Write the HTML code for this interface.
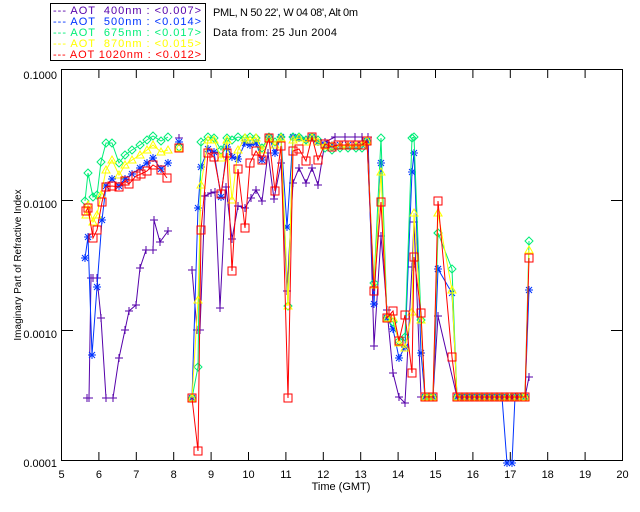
<!DOCTYPE html>
<html><head><meta charset="utf-8"><style>
body{margin:0;background:#fff;width:640px;height:512px;overflow:hidden}
svg{display:block;font-family:"Liberation Sans",sans-serif}
text{white-space:pre}
</style></head><body>
<svg id="s" width="640" height="512" xmlns="http://www.w3.org/2000/svg">
<rect x="50.5" y="3.5" width="155" height="57" fill="#fff" stroke="#000"/>
<g font-size="11">
<text x="53" y="14" fill="#5500aa" textLength="148" lengthAdjust="spacing">--- AOT  400nm : &lt;0.007&gt;</text>
<text x="53" y="25" fill="#0033ff" textLength="148" lengthAdjust="spacing">--- AOT  500nm : &lt;0.014&gt;</text>
<text x="53" y="36" fill="#00ee77" textLength="148" lengthAdjust="spacing">--- AOT  675nm : &lt;0.017&gt;</text>
<text x="53" y="47" fill="#ffff00" textLength="148" lengthAdjust="spacing">--- AOT  870nm : &lt;0.015&gt;</text>
<text x="53" y="58" fill="#ff0000" textLength="148" lengthAdjust="spacing">--- AOT 1020nm : &lt;0.012&gt;</text>
<text x="213" y="16" fill="#000" textLength="145" lengthAdjust="spacing">PML, N 50 22', W 04 08', Alt 0m</text>
<text x="213" y="36" fill="#000" textLength="124" lengthAdjust="spacing">Data from: 25 Jun 2004</text>
<text x="57" y="79" text-anchor="end">0.1000</text>
<text x="57" y="208" text-anchor="end">0.0100</text>
<text x="57" y="338" text-anchor="end">0.0010</text>
<text x="57" y="467" text-anchor="end">0.0001</text>
<text x="341" y="490" text-anchor="middle">Time (GMT)</text>
<text transform="translate(21,265) rotate(-90)" text-anchor="middle" font-size="10">Imaginary Part of Refractive Index</text>
</g>
<rect x="61.5" y="69.5" width="561" height="391" fill="none" stroke="#000"/>
<g id="ax" stroke="#000"></g>
<g id="xl" font-size="11" text-anchor="middle"></g>
<g id="d" fill="none" stroke-width="1"></g>
</svg>
<script>
var ax=document.getElementById('ax'),xl=document.getElementById('xl'),d=document.getElementById('d');
var NS='http://www.w3.org/2000/svg';
function el(p,t,a){var e=document.createElementNS(NS,t);for(var k in a)e.setAttribute(k,a[k]);p.appendChild(e);return e;}
for(var h=5;h<=20;h++){var x=61.5+37.4*(h-5);
 if(h>5&&h<20){el(ax,'line',{x1:x,y1:70,x2:x,y2:78});el(ax,'line',{x1:x,y1:460,x2:x,y2:452});}
 var t=el(xl,'text',{x:x,y:478});t.textContent=h;}
[200.5,330.5].forEach(function(y){el(ax,'line',{x1:62,y1:y,x2:73,y2:y});el(ax,'line',{x1:622,y1:y,x2:611,y2:y});});
function P(s){return s.trim().split(/\s+/).map(function(q){return q.split(',').map(Number)});}
var S=[
{c:'#5500aa',m:'+',p:P("87,398 89,398 91,278 93,278 97,278 101,318 106,398 113,398 119,358 125,330 129,311 136,305 140,268 146,250 153,250 154,220 160,242 168,231"),p2:P("179,138"),p3:P("192,270 197,330 200,330 205,196 211,193 215,192 220,308 226,187 232,239 238,206 245,208 251,198 256,190 262,201 268,153 274,199 281,163 287,291 293,183 299,168 306,183 312,168 318,185 325,142 335,137 345,137 355,137 362,137 368,137 374,346 381,236 387,310 393,373 399,397 405,403 412,267 414,222 421,397 425,397 429,397 433,397 438,316"),p4:P("457,397 462,397 467,397 472,397 477,397 482,397 487,397 492,397 497,397 502,397 507,397 512,397 517,397 522,397 525,397 529,377")},
{c:'#0033ff',m:'*',p:P("85,258 88,237 92,355 97,287 102,220 106,186 112,179 119,186 125,179 132,174 140,168 147,163 153,158 161,169 168,163"),p2:P("179,142"),p3:P("192,398 198,208 201,167 208,149 214,152 221,197 227,147 232,157 238,159 245,143 250,145 256,143 262,160 269,137 275,153 281,137 287,227 293,137 299,138 306,140 312,137 318,142 325,145 332,145 340,145 348,145 356,145 362,145 367,141 374,304 381,163 387,318 393,329 399,358 405,347 412,172 414,153 421,353 425,397 429,397 433,397 438,269"),p4:P("452,293 457,397 462,397 467,397 472,397 477,397 482,397 487,397 492,397 497,397 502,397 507,463 512,463 515,397 520,397 525,397 529,290")},
{c:'#00ee77',m:'d',p:P("85,201 88,173 93,197 97,195 101,162 106,143 112,143 119,163 125,155 132,150 140,145 147,140 153,136 161,141 168,137"),p2:P("179,147"),p3:P("192,398 198,367 201,142 208,137 214,138 221,150 227,138 232,140 238,137 245,138 250,137 256,138 262,148 269,137 275,142 281,137 288,306 293,137 299,137 306,140 312,137 318,140 325,148 332,150 340,148 348,148 356,148 362,148 367,141 374,283 381,138 387,318 393,322 399,341 405,337 412,138 414,137 421,320 425,397 429,397 433,397 438,233"),p4:P("452,269 457,397 462,397 467,397 472,397 477,397 482,397 487,397 492,397 497,397 502,397 507,397 512,397 517,397 522,397 525,397 529,241")},
{c:'#ffff00',m:'t',p:P("86,215 88,205 93,222 97,215 101,195 106,170 112,160 119,175 125,165 132,160 140,155 147,150 153,145 161,152 168,150"),p2:P("179,148"),p3:P("192,398 198,300 201,185 208,140 214,140 221,158 227,140 232,200 238,150 245,138 250,140 256,138 262,150 269,138 275,145 281,138 288,306 293,140 299,138 306,142 312,138 318,142 325,146 332,146 340,146 348,146 356,146 362,146 367,141 374,285 381,172 387,318 393,318 399,343 405,348 412,312 414,213 421,320 425,397 429,397 433,397 438,213"),p4:P("452,290 457,397 462,397 467,397 472,397 477,397 482,397 487,397 492,397 497,397 502,397 507,397 512,397 517,397 522,397 525,397 529,250")},
{c:'#ff0000',m:'s',p:P("86,211 88,208 93,238 97,230 102,202 106,187 112,186 119,187 125,181 129,184 136,176 141,174 147,171 153,165 161,170 167,178"),p2:P("179,148"),p3:P("192,398 198,451 201,230 208,153 214,157 221,194 227,153 232,271 238,169 245,228 250,163 256,151 262,160 269,138 275,191 281,146 288,398 293,151 299,149 306,161 312,137 318,160 325,144 332,147 338,145 344,145 350,145 356,145 362,145 367,141 374,291 381,202 387,318 393,311 399,341 405,315 412,373 414,257 421,313 425,397 429,397 433,397 438,201"),p4:P("452,357 457,397 462,397 467,397 472,397 477,397 482,397 487,397 492,397 497,397 502,397 507,397 512,397 517,397 522,397 525,397 529,258")}
];
function mk(c,m,x,y){
 if(m=='+'){el(d,'path',{d:'M'+(x-4)+' '+y+'h8M'+x+' '+(y-4)+'v8',stroke:c});}
 else if(m=='*'){el(d,'path',{d:'M'+(x-4)+' '+y+'h8M'+x+' '+(y-4)+'v8M'+(x-3)+' '+(y-3)+'l6 6M'+(x+3)+' '+(y-3)+'l-6 6',stroke:c});}
 else if(m=='d'){el(d,'path',{d:'M'+x+' '+(y-4)+'l4 4l-4 4l-4 -4z',stroke:c});}
 else if(m=='t'){el(d,'path',{d:'M'+x+' '+(y-4)+'l4 7h-8z',stroke:c});}
 else {el(d,'rect',{x:x-4,y:y-4,width:8,height:8,stroke:c});}
}
S.forEach(function(s){
 [s.p,s.p2,s.p3,s.p4].forEach(function(p,i){
  if(i==3){p=[s.p3[s.p3.length-1]].concat(p);}
  el(d,'polyline',{points:p.map(function(q){return q.join(',')}).join(' '),stroke:s.c});
  p.forEach(function(q){mk(s.c,s.m,q[0],q[1]);});
 });
});
</script>
</body></html>
